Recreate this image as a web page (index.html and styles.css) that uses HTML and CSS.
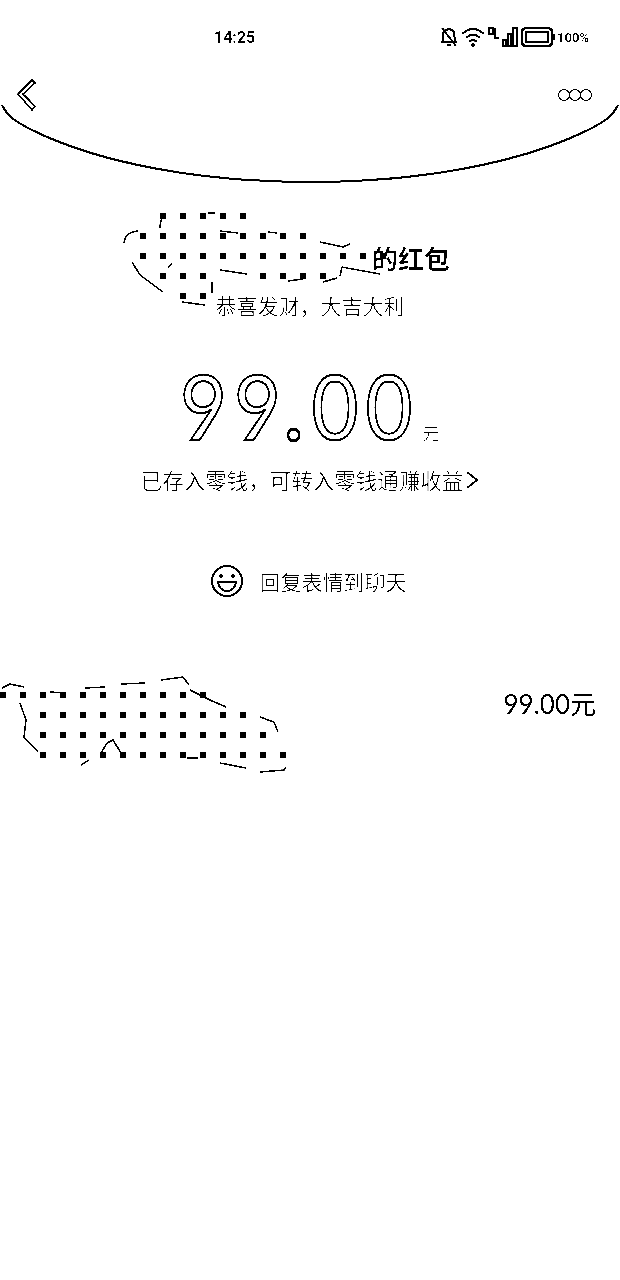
FILE: index.html
```html
<!DOCTYPE html>
<html lang="zh-CN">
<head>
    <meta charset="UTF-8">
    <meta name="viewport" content="width=device-width, initial-scale=1.0">
    <title>红包详情</title>
    <link rel="stylesheet" href="styles.css">
</head>
<body>
    <div class="page">
        <!-- Red header edge, drawn as a single curve -->
        <svg class="curve" width="620" height="190" viewBox="0 0 620 190">
            <path d="M2 105C8 118 20 124 34 131C100 163 200 182 310 182C420 182 520 163 586 131C600 124 612 118 618 105" fill="none" stroke="#000" stroke-width="2"/>
        </svg>

        <div class="status-bar">
            <span class="time">14:25</span>
            <div class="status-icons">
                <svg width="20" height="22" viewBox="0 0 20 22">
                    <path d="M4 16V9a6 6 0 0 1 11-3l1 10zM2 16H18M8 19h4M3 2l14 18" fill="none" stroke="#000" stroke-width="2"/>
                </svg>
                <svg width="24" height="22" viewBox="0 0 24 22">
                    <path d="M1 8Q12-2 23 8M5 12Q12 5 19 12M8 16Q12 12 16 16" fill="none" stroke="#000" stroke-width="2"/>
                    <circle cx="12" cy="19" r="2"/>
                </svg>
                <svg width="32" height="22" viewBox="0 0 32 22">
                    <path d="M2 2h4v6h-4zM8 2v10h4M16 20v-6h3v6zM21 20V8h3v12zM26 20V2h4v18z" fill="none" stroke="#000" stroke-width="1.5"/>
                </svg>
                <svg width="34" height="22" viewBox="0 0 34 22">
                    <rect x="1" y="2" width="30" height="18" rx="4" fill="none" stroke="#000" stroke-width="2.5"/>
                    <rect x="5" y="6" width="22" height="10" fill="none" stroke="#000" stroke-width="1.5"/>
                    <rect x="32" y="8" width="2" height="6"/>
                </svg>
                <span class="battery">100%</span>
            </div>
        </div>

        <div class="nav-bar">
            <svg width="20" height="32" viewBox="0 0 20 32">
                <path d="M15 1L18 4L6 15L18 27L15 31L1 15Z" fill="none" stroke="#000" stroke-width="1.5"/>
            </svg>
            <div class="more">
                <span class="ring"></span><span class="ring"></span><span class="ring"></span>
            </div>
        </div>

        <div class="hero">
            <div class="sender">的红包</div>
            <div class="blessing">恭喜发财，大吉大利</div>
            <div class="amount"><span class="amount-num">9<span class="amount-tight">9</span><span class="amount-dot">.</span>00</span><span class="amount-unit">元</span></div>
            <div class="notice">已存入零钱，可转入零钱通赚收益<svg width="14" height="20" viewBox="0 0 14 20"><path d="M2 2L12 10L2 18" fill="none" stroke="#000" stroke-width="2"/></svg></div>
            <div class="reply">
                <svg width="34" height="34" viewBox="0 0 34 34">
                    <circle cx="17" cy="17" r="15" fill="none" stroke="#000" stroke-width="2"/>
                    <circle cx="11" cy="12" r="2"/>
                    <circle cx="23" cy="12" r="2"/>
                    <path d="M8 18H26C25 30 9 30 8 18Z" fill="none" stroke="#000" stroke-width="2"/>
                </svg>
                <span>回复表情到聊天</span>
            </div>
        </div>

        <div class="record">
            <span class="record-amount">99.00元</span>
        </div>

        <!-- Mosaics covering the names -->
        <svg class="mosaic" width="620" height="800" viewBox="0 0 620 800">
            <defs>
                <pattern id="dots-top" width="20" height="20" patternUnits="userSpaceOnUse" x="0" y="13">
                    <rect width="6" height="6"/>
                </pattern>
                <pattern id="dots-low" width="20" height="20" patternUnits="userSpaceOnUse" x="0" y="12">
                    <rect width="6" height="6"/>
                </pattern>
            </defs>
            <g fill="url(#dots-top)">
                <rect x="160" y="213" width="90" height="6"/>
                <rect x="140" y="233" width="170" height="6"/>
                <rect x="140" y="253" width="250" height="6"/>
                <rect x="160" y="273" width="60" height="6"/>
                <rect x="260" y="273" width="70" height="6"/>
                <rect x="180" y="293" width="30" height="6"/>
            </g>
            <g fill="url(#dots-low)">
                <rect x="0" y="692" width="210" height="6"/>
                <rect x="40" y="712" width="210" height="6"/>
                <rect x="40" y="732" width="230" height="6"/>
                <rect x="40" y="752" width="250" height="6"/>
            </g>
            <path d="M124 243Q125 232 138 231M160 228Q160 218 165 215M208 213H215M220 231L238 233M268 232L277 233M320 242L343 247L350 244M132 262L140 275L163 292M168 268L172 263M220 270L247 274M288 281L303 279M323 282L337 278M340 276L342 267L380 274M212 282V293M182 302L205 305" fill="none" stroke="#000" stroke-width="1.5"/>
            <path d="M2 688L10 684L24 687M50 692L65 693M85 688L105 687M121 684L145 683M161 680L183 677L189 685M190 690L210 700L226 707M260 717L274 722L278 732M20 703L26 720L24 737L38 752M81 765L89 760M101 753L107 743L113 740L121 753M187 758H198M220 763L246 768M260 772L284 770L286 767" fill="none" stroke="#000" stroke-width="1.5"/>
        </svg>
    </div>
</body>
</html>
```

FILE: styles.css
```css
* {
    margin: 0;
    padding: 0;
    box-sizing: border-box;
}

body {
    background-color: #fff;
}

/* The whole page is pushed to pure black and white */
.page {
    position: relative;
    width: 620px;
    height: 1280px;
    overflow: hidden;
    background-color: #fff;
    color: #666;
    font-family: 'Noto Sans CJK SC', 'Liberation Sans', sans-serif;
    filter: grayscale(1) contrast(30);
}

.curve,
.mosaic {
    position: absolute;
    top: 0;
    left: 0;
}

.status-bar {
    display: flex;
    align-items: center;
    height: 74px;
    padding: 0 31px 0 214px;
}

.time {
    font-family: 'Roboto', sans-serif;
    font-size: 16px;
    font-weight: bold;
    color: #444;
}

.status-icons {
    display: flex;
    align-items: center;
    gap: 2px;
    margin-left: auto;
}

.battery {
    font-family: 'Roboto', sans-serif;
    font-size: 13px;
    font-weight: bold;
    color: #444;
}

.nav-bar {
    display: flex;
    align-items: center;
    justify-content: space-between;
    height: 42px;
    padding: 0 28px 0 17px;
}

.more {
    display: flex;
}

.ring {
    width: 12px;
    height: 12px;
    margin-left: -1px;
    border: 1.5px solid #000;
    border-radius: 50%;
}

.hero {
    display: flex;
    flex-direction: column;
    align-items: center;
    padding-top: 125px;
}

.sender {
    align-self: flex-end;
    padding-right: 170px;
    font-size: 26px;
    line-height: 34px;
    font-weight: bold;
    color: #666;
}

.blessing {
    margin-top: 15px;
    font-size: 21px;
    line-height: 30px;
}

.amount {
    display: flex;
    align-items: baseline;
    margin-top: 35px;
    line-height: 100px;
}

.amount-num {
    display: inline-block;
    margin-right: -38px;
    font-family: 'Lato', sans-serif;
    font-size: 92px;
    font-weight: 400;
    letter-spacing: 8px;
    color: #fff;
    -webkit-text-stroke: 2px #000;
    transform: scaleX(0.88);
    transform-origin: left center;
}

.amount-tight {
    letter-spacing: 2px;
}

.amount-dot {
    font-family: 'Roboto', sans-serif;
    font-weight: 500;
    letter-spacing: 7px;
    -webkit-text-stroke: 3px #000;
}

.amount-unit {
    margin-left: 8px;
    font-size: 17px;
    line-height: 20px;
}

.notice {
    display: flex;
    align-items: center;
    gap: 2px;
    margin-top: 6px;
    font-size: 21.5px;
    line-height: 30px;
}

.reply {
    display: flex;
    align-items: center;
    gap: 16px;
    height: 32px;
    margin-top: 70px;
    padding-right: 4px;
    font-size: 21px;
}

.record {
    display: flex;
    justify-content: flex-end;
    align-items: center;
    height: 40px;
    margin-top: 85px;
    padding-right: 24px;
}

.record-amount {
    font-family: 'Lato', sans-serif;
    font-size: 26px;
    font-weight: 400;
    color: #000;
}
```
